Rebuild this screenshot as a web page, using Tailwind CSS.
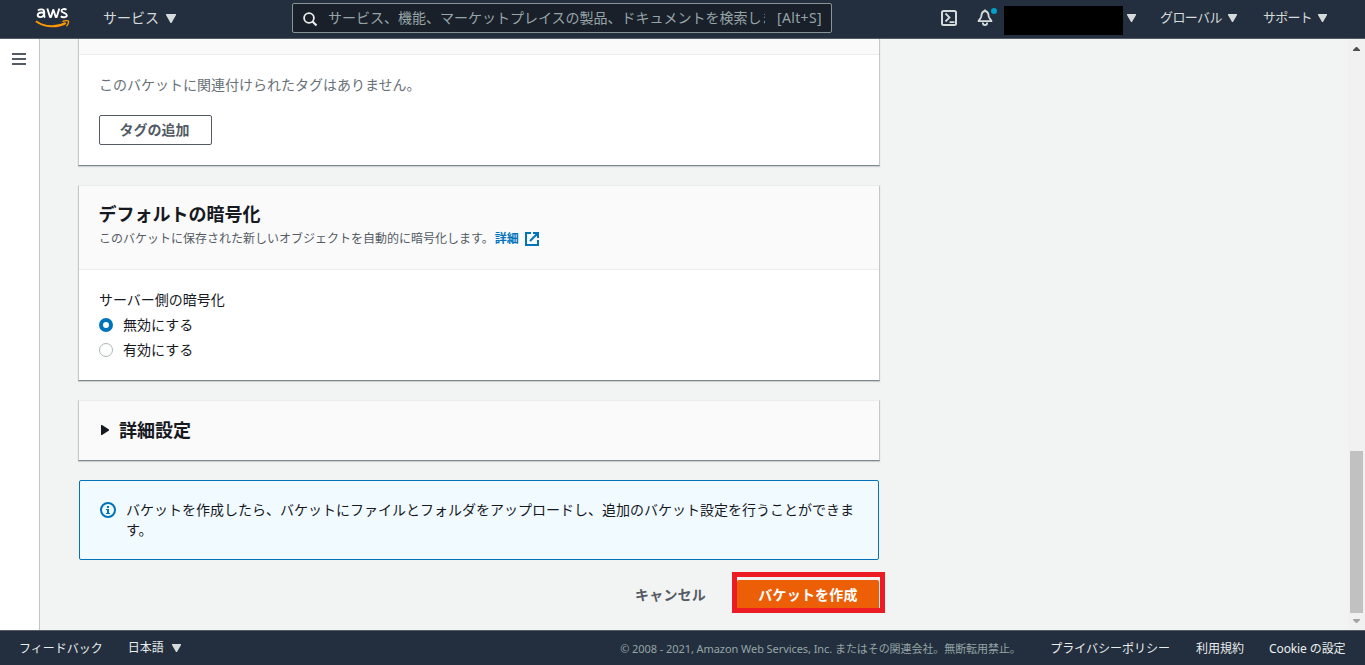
<!DOCTYPE html>
<html lang="ja">
<head>
<meta charset="utf-8">
<title>S3 バケットの作成</title>
<script src="https://cdn.jsdelivr.net/npm/@tailwindcss/browser@4"></script>
</head>
<body class="flex h-[665px] w-[1365px] flex-col overflow-hidden bg-[#f2f3f3] font-['Noto_Sans','Noto_Sans_CJK_JP',sans-serif] text-sm text-[#16191f]">
<header class="flex h-[39px] shrink-0 items-start border-b border-[#545b64] bg-[#232f3e] text-[#d5dbdb]">
  <svg class="mt-[7px] ml-[35px] h-[22px] w-[35px] shrink-0" viewBox="0 0 35 22" fill="none">
    <g stroke="#fff" stroke-width="1.9">
      <path d="M3 3.5C4.500 2.200 9.200 1.400 9.200 5V8.500Q9.200 10 10.200 10.500M9 5.800C6 5.200 2.700 5.500 2.700 8S7.500 11.300 9 7.500"/>
      <path d="M12.300 1.500 15 10H16L18.100 3H18.500L20.700 10H21.700L24.300 1.500" stroke-linejoin="round"/>
      <path d="M31.500 2.800C29.500 1.500 26.500 1.900 26.500 4S31.800 5.800 31.800 8.200 27.500 10.800 25.800 9.300"/>
    </g>
    <path d="M1 14.200C10 20.600 22 20.800 30.800 16" stroke="#f90" stroke-width="2"/>
    <path d="M27.500 14.600C30 13.300 33.500 13.300 33.600 14.400S32.800 17.800 31.500 19.200" stroke="#f90" stroke-width="1.400"/>
  </svg>
  <div class="mt-[8px] ml-[33px] flex items-center leading-5">サービス<svg class="ml-[7px] h-[9px] w-[10px]" viewBox="0 0 10 9" fill="currentColor"><path d="M0 0H10V1L5.500 9H4.500L0 1Z"/></svg></div>
  <div class="mt-[3px] ml-[116px] flex h-[30px] w-[540px] items-center rounded-[2px] border border-[#879596] bg-[#1a202a] text-[#95a5a6]">
    <svg class="mt-[2px] ml-[10px] h-[15px] w-[15px] shrink-0 text-[#eaeded]" viewBox="0 0 15 15" fill="none" stroke="currentColor" stroke-width="1.800"><circle cx="6" cy="6" r="4.900"/><path d="M9.500 9.500 13.500 13.500" stroke-width="2.200"/></svg>
    <div class="ml-[10px] w-[437px] overflow-hidden leading-6 whitespace-nowrap">サービス、機能、マーケットプレイスの製品、ドキュメントを検索します</div>
    <div class="ml-[12px] leading-6 tracking-[0.35px] whitespace-nowrap">[Alt+S]</div>
  </div>
  <svg class="mt-[10px] ml-[109px] h-4 w-4 shrink-0" viewBox="0 0 16 16" fill="none" stroke="currentColor" stroke-width="2"><rect x="1" y="1" width="14" height="14" rx="1.500"/><path d="M4.500 3.500 8.500 7.500 4.500 11.500M8.500 12.200H13.500" stroke-width="1.800"/></svg>
  <svg class="mt-[7px] ml-5 h-5 w-5 shrink-0" viewBox="0 0 20 20" fill="none" stroke="currentColor" stroke-width="1.800"><path d="M8 4C4.500 4.500 4.500 7 4.300 9.500 4.100 11.200 2.500 12 1.500 14.200H14.500C13.500 12 11.900 11.200 11.700 9.500 11.500 7 11.500 4.500 8 4ZM8 4V2.500" stroke-linejoin="round"/><path d="M5.800 15.500C5.800 19 10.200 19 10.200 15.500"/><circle cx="17" cy="4" r="3" fill="#00a1c9" stroke="none"/></svg>
  <div class="mt-[6px] ml-[7px] h-[29px] w-[119px] bg-black"></div>
  <svg class="mt-[14px] ml-[4px] h-2 w-[9px]" viewBox="0 0 9 8" fill="currentColor"><path d="M0 0H9V1L5 8H4L0 1Z"/></svg>
  <div class="mt-[7px] ml-[24px] flex w-[77px] items-center justify-between leading-5"><span class="text-[13px] tracking-[-0.6px]">グローバル</span><svg class="mt-[2px] h-2 w-[9px]" viewBox="0 0 9 8" fill="currentColor"><path d="M0 0H9V1L5 8H4L0 1Z"/></svg></div>
  <div class="mt-[7px] ml-[26px] flex w-[64px] items-center justify-between leading-5"><span class="text-[13px] tracking-[-0.8px]">サポート</span><svg class="mt-[2px] h-2 w-[9px]" viewBox="0 0 9 8" fill="currentColor"><path d="M0 0H9V1L5 8H4L0 1Z"/></svg></div>
</header>

<div class="flex min-h-0 flex-1">
  <nav class="flex w-10 shrink-0 border-r border-[#c1c5c6] bg-white pt-[14px] pl-3">
    <svg class="h-3 w-[14px] text-[#545b64]" viewBox="0 0 14 12" fill="currentColor"><path d="M0 0H14V2H0ZM0 5H14V7H0ZM0 10H14V12H0Z"/></svg>
  </nav>
  <main class="ml-[38px] flex w-[807px] shrink-0 flex-col">
    <section class="h-[127px] w-[802px] shrink-0 border-x border-b border-[#c3c8c9] border-b-[#7b888c] bg-white shadow-[0_1px_1px_0_rgba(0,28,36,0.15)]">
      <div class="h-4 border-b border-[#eaeded] bg-[#fafafa]"></div>
      <div class="px-5 pt-5">
        <p class="leading-5 text-[#687078]">このバケットに関連付けられたタグはありません。</p>
        <button class="mt-5 block h-[30px] w-[113px] rounded-[2px] border border-[#545b64] bg-white pr-[2px] leading-7 font-bold text-[#545b64]">タグの追加</button>
      </div>
    </section>
    <section class="mt-[19px] h-[196px] w-[802px] shrink-0 border border-[#c3c8c9] border-t-[#eaeded] border-b-[#7b888c] bg-white shadow-[0_1px_1px_0_rgba(0,28,36,0.15)]">
      <div class="h-[84px] border-b border-[#eaeded] bg-[#fafafa] pt-[17px] pr-5 pl-[19.5px]">
        <h2 class="text-lg leading-[22px] font-bold">デフォルトの暗号化</h2>
        <p class="mt-[5px] flex items-center pl-[0.5px] text-xs leading-[18px] text-[#545b64]">このバケットに保存された新しいオブジェクトを自動的に暗号化します。<a class="ml-px font-bold text-[#0073bb]">詳細</a><svg class="ml-[6px] h-[14px] w-[14px] text-[#0073bb]" viewBox="0 0 14 14" fill="none" stroke="currentColor" stroke-width="2"><path d="M6 1H1V13H13V8M8 1H13V6M13 1 5 9"/></svg></p>
      </div>
      <div class="px-5 pt-5">
        <div class="leading-5">サーバー側の暗号化</div>
        <div class="mt-[5px] flex items-center leading-5"><span class="mr-[10px] h-[14px] w-[14px] rounded-full border-4 border-[#0073bb] bg-white"></span>無効にする</div>
        <div class="mt-[5px] flex items-center leading-5"><span class="mr-[10px] h-[14px] w-[14px] rounded-full border border-[#aab7b8] bg-white"></span>有効にする</div>
      </div>
    </section>
    <section class="mt-[19px] flex h-[61px] w-[802px] shrink-0 items-center border border-[#c3c8c9] border-t-[#eaeded] border-b-[#7b888c] bg-[#fafafa] pb-[2px] pl-[22px] shadow-[0_1px_1px_0_rgba(0,28,36,0.15)]">
      <svg class="mt-px h-[10px] w-2" viewBox="0 0 8 10" fill="currentColor"><path d="M0 0H1L8 4.500V5.500L1 10H0Z"/></svg>
      <h2 class="ml-[10px] text-lg leading-[22px] font-bold">詳細設定</h2>
    </section>
    <div class="mt-[19px] ml-px flex h-20 w-[800px] shrink-0 rounded-[2px] border border-[#0073bb] bg-[#f1faff] pt-[19px] pl-5">
      <svg class="mt-[2px] h-4 w-4 shrink-0 text-[#0073bb]" viewBox="0 0 16 16" fill="none" stroke="currentColor"><circle cx="8" cy="8" r="7" stroke-width="2"/><path d="M7 4H9V6H7ZM6 7H9V11H10V12H6V11H7V8H6Z" fill="currentColor" stroke="none"/></svg>
      <p class="ml-[10px] w-[732px] leading-5">バケットを作成したら、バケットにファイルとフォルダをアップロードし、追加のバケット設定を行うことができます。</p>
    </div>
    <div class="mt-[12px] flex h-[41px] shrink-0 items-center justify-end">
      <button class="mr-[26px] pt-[5px] leading-5 font-bold tracking-[0.2px] text-[#545b64]">キャンセル</button>
      <div class="h-[41px] w-[153px] border-5 border-[#ed1c24] bg-[#f2f3f3] pt-[3px]">
        <button class="block h-[28px] w-[142px] rounded-t-[2px] bg-[#ec5f07] pt-px leading-[27px] font-bold tracking-[0.2px] text-white">バケットを作成</button>
      </div>
    </div>
  </main>
  <div class="ml-auto flex w-[17px] flex-col items-center bg-[#f1f1f1]">
    <svg class="mt-[8px] h-1 w-[7px]" viewBox="0 0 7 4" fill="#505050"><path d="M0 4V3L3 0H4L7 3V4Z"/></svg>
    <div class="mt-[400px] mr-px h-[162px] w-[13px] shrink-0 bg-[#c1c1c1]"></div>
    <svg class="mt-[6px] h-1 w-[7px]" viewBox="0 0 7 4" fill="#a3a3a3"><path d="M0 0V1L3 4H4L7 1V0Z"/></svg>
  </div>
</div>

<footer class="flex h-[35px] shrink-0 items-center border-t border-[#545b64] bg-[#232f3e] pt-[2px] pr-5 pl-[19px] text-xs text-[#eaeded]">
  <span>フィードバック</span>
  <span class="-mt-[2px] ml-[25px] flex items-center">日本語<svg class="ml-[8px] h-2 w-[9px]" viewBox="0 0 9 8" fill="#d5dbdb"><path d="M0 0H9V1L5 8H4L0 1Z"/></svg></span>
  <span class="ml-auto w-[404px] text-[11px] tracking-[-0.07px] whitespace-nowrap text-[#95a5a6]">© 2008 - 2021, Amazon Web Services, Inc. またはその関連会社。無断転用禁止。</span>
  <span class="ml-[26px]">プライバシーポリシー</span>
  <span class="ml-[26px]">利用規約</span>
  <span class="ml-[25px] w-[76px] tracking-[-0.1px] whitespace-nowrap">Cookie の設定</span>
</footer>
</body>
</html>
